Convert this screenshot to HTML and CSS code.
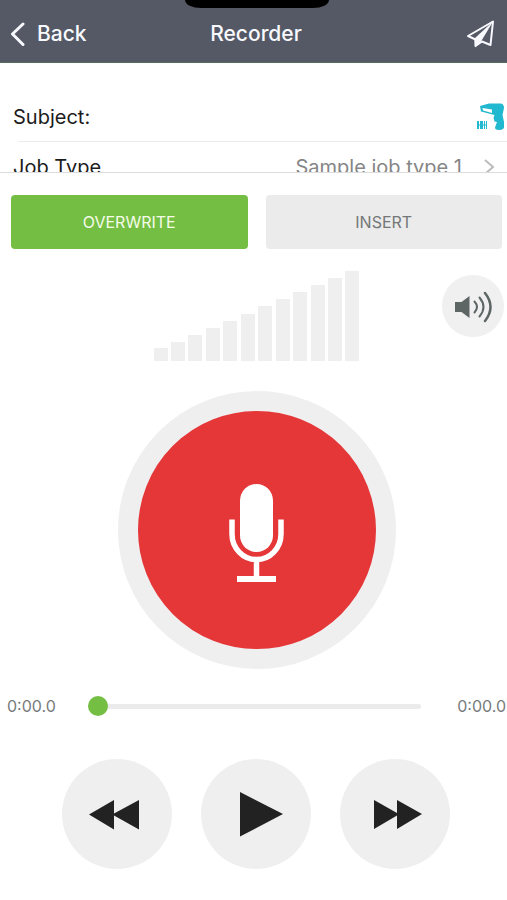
FILE: index.html
```html
<!DOCTYPE html>
<html lang="en">
<head>
<meta charset="utf-8">
<meta name="viewport" content="width=device-width, initial-scale=1">
<title>Recorder</title>
<link rel="stylesheet" href="styles.css">
</head>
<body>
<header class="bar">
  <span class="notch"></span>
  <a class="back" href="#">
    <svg width="16" height="26" viewBox="0 0 16 26"><path d="M14 3 3.500 13l10.500 10.500" fill="none" stroke="currentColor" stroke-width="3" stroke-linecap="round" stroke-linejoin="round"/></svg>
    Back
  </a>
  <h1 class="title">Recorder</h1>
  <button class="send" type="button" aria-label="Send">
    <svg width="30" height="30" viewBox="0 0 30 30"><path d="M2 17 27 2.500 24.500 26l-8.500-3.500L9.500 27V20.500Z" fill="none" stroke="currentColor" stroke-width="2" stroke-linejoin="round"/><path d="M8.500 19.500 27 2.500 15 22.500 9 28.500Z" fill="currentColor"/></svg>
  </button>
</header>
<main>
  <section class="details">
    <div class="row">
      <label for="subject">Subject:</label>
      <input class="subject" id="subject" type="text">
      <button class="scan" type="button" aria-label="Scan barcode">
        <svg width="30" height="30" viewBox="0 0 30 30"><path fill="#22b8cf" fill-rule="evenodd" d="M4 4 13 1.500 25 1.500Q28 2 28 6L26.500 13 28 20V26Q26 28.500 23 28 19 28 19 25.500L21 20 18.500 19.500 17.500 16 18.500 13 5 9.500ZM6.500 6 7 8.500 16 11V7.500Z"/><path fill="#22b8cf" d="M1 19h2v8H1zM4 19h3v8H4zM8 19h1v8H8zM10 19h1v8h-1z"/><path d="M1 23h10" stroke="#22b8cf"/></svg>
      </button>
    </div>
    <a class="row row-link" href="#">
      <span>Job Type</span>
      <span class="value">Sample job type 1</span>
      <svg width="12" height="18" viewBox="0 0 12 18"><path d="m2 2 8 7-8 7" fill="none" stroke="#bcbcbc" stroke-width="2"/></svg>
    </a>
  </section>

  <div class="modes">
    <button class="mode mode-on" type="button">OVERWRITE</button>
    <button class="mode" type="button">INSERT</button>
  </div>

  <div class="level">
    <div class="meter" aria-hidden="true">
      <i style="height:13px"></i><i style="height:19px"></i><i style="height:26px"></i><i style="height:33px"></i><i style="height:40px"></i><i style="height:47px"></i><i style="height:55px"></i><i style="height:62px"></i><i style="height:69px"></i><i style="height:76px"></i><i style="height:83px"></i><i style="height:90px"></i>
    </div>
    <button class="speaker" type="button" aria-label="Speaker">
      <svg width="40" height="34" viewBox="0 0 40 34"><path fill="#5d6565" d="M2 13h6.500l8-6v22l-8-6H2z"/><g fill="none" stroke="#5d6565" stroke-width="2" stroke-linecap="round"><path d="M21.500 12.500q5 5.500 0 11"/><path d="M26.500 8.500q8 9.500 0 19"/><path stroke-width="2.500" d="M32 4q11 14 0 28"/></g></svg>
    </button>
  </div>

  <button class="record" type="button" aria-label="Record">
    <svg width="56" height="104" viewBox="0 -6 56 104"><rect x="11" y="0" width="33" height="68" rx="16.500" fill="#fff"/><path d="M3 35.500v14.500a24.500 25.500 0 0 0 49 0V35.500M27.500 75v20" fill="none" stroke="#fff" stroke-width="5.500"/><path d="M8 92h39v6H8z" fill="#fff"/></svg>
  </button>

  <div class="timeline">
    <label for="position">0:00.0</label>
    <input class="position" id="position" type="range" min="0" max="100" value="0">
    <span>0:00.0</span>
  </div>

  <div class="transport">
    <button type="button" aria-label="Rewind"><svg width="110" height="110" viewBox="0 0 110 110"><path fill="#222" d="M27 55.500 52 41v13.500L77 41v29.500L52 56.500v14z"/></svg></button>
    <button type="button" aria-label="Play"><svg width="110" height="110" viewBox="0 0 110 110"><path fill="#222" d="M39 33 82 55 39 77.500z"/></svg></button>
    <button type="button" aria-label="Fast forward"><svg width="110" height="110" viewBox="0 0 110 110"><path fill="#222" d="M34 41 57 54V41L82 55 57 70V56.500L34 70z"/></svg></button>
  </div>
</main>
</body>
</html>
```
FILE: styles.css
```css
* { box-sizing: border-box; }

body {
  margin: 0;
  background: #fff;
  color: #1c1c1c;
  font-family: Inter, "Liberation Sans", sans-serif;
  font-size: 20px;
  line-height: 24px;
}

button {
  display: flex;
  align-items: center;
  justify-content: center;
  padding: 0;
  border: 0;
  background: none;
  color: inherit;
  font: inherit;
}

a { color: inherit; text-decoration: none; }
svg { display: block; flex: none; }

.bar {
  position: relative;
  display: grid;
  grid-template-columns: 1fr auto 1fr;
  align-items: center;
  height: 63px;
  padding: 5px 11px 0 9px;
  border-bottom: 1px solid #56705f;
  background: #555965;
  color: #f8f9ff;
  font-size: 21px;
  font-weight: 500;
}

.notch {
  position: absolute;
  top: 0;
  left: 50%;
  width: 144px;
  height: 8px;
  margin-left: -69px;
  border-radius: 0 0 16px 16px / 0 0 8px 8px;
  background: #000;
}

.back { display: flex; align-items: center; gap: 12px; }
.title { margin: 0; padding-left: 7px; font-size: 21px; font-weight: 500; }
.send { justify-self: end; }

.details {
  height: 110px;
  padding-top: 30px;
  border-bottom: 1px solid #dcdcdc;
  overflow: hidden;
}

.row { display: flex; align-items: center; height: 48px; padding: 0 1px 0 13px; }
.row-link { height: 51px; padding-right: 12px; border-top: 1px solid #ececec; border-image: linear-gradient(90deg, transparent 19px, #ececec 19px) 1; }

.subject {
  flex: 1;
  min-width: 0;
  border: 0;
  outline: 0;
  background: none;
  font: inherit;
}

.value { margin-left: auto; margin-right: 21px; color: #858585; }

.modes { display: flex; gap: 18px; padding: 22px 5px 0 11px; }

.mode {
  flex: 1;
  height: 54px;
  border-radius: 4px;
  background: #ebebeb;
  color: #737777;
  font-size: 16px;
}

.mode-on { background: #74bf43; color: #f4fbe9; }

.level {
  display: grid;
  grid-template-columns: 1fr 206px 1fr;
  align-items: start;
  padding: 22px 3px 0 9px;
}

.meter { grid-column: 2; display: flex; align-items: flex-end; justify-content: space-between; height: 90px; }
.meter i { width: 14px; background: #efefef; }

.speaker {
  justify-self: end;
  width: 62px;
  height: 62px;
  margin-top: 4px;
  border-radius: 50%;
  background: #f0f0f0;
}

.record {
  width: 278px;
  height: 278px;
  margin: 30px auto 0;
  border: 20px solid #efefef;
  border-radius: 50%;
  background: #e53638;
  translate: 3px 0;
}

.timeline {
  display: flex;
  align-items: center;
  height: 20px;
  margin-top: 27px;
  padding: 0 1px 0 7px;
  color: #777b7b;
  font-size: 16px;
}

.position {
  flex: 1;
  min-width: 0;
  height: 20px;
  margin: 0 36px 0 32px;
  appearance: none;
  background: none;
}

.position::-webkit-slider-runnable-track {
  height: 5px;
  border-radius: 3px;
  background: #ebebeb;
}

.position::-webkit-slider-thumb {
  appearance: none;
  width: 20px;
  height: 20px;
  margin-top: -8px;
  border-radius: 50%;
  background: #74bf43;
}

.transport { display: flex; justify-content: center; gap: 29px; padding: 43px 0 30px 5px; }
.transport button { border-radius: 50%; background: #efefef; }
```
